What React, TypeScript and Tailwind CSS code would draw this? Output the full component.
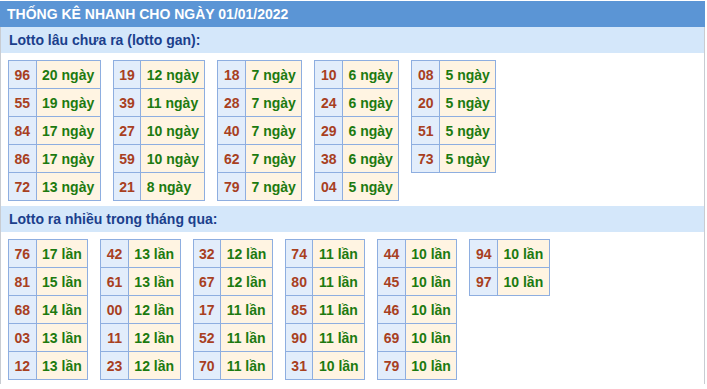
const ganTables: [string, number][][] = [
  [['96', 20], ['55', 19], ['84', 17], ['86', 17], ['72', 13]],
  [['19', 12], ['39', 11], ['27', 10], ['59', 10], ['21', 8]],
  [['18', 7], ['28', 7], ['40', 7], ['62', 7], ['79', 7]],
  [['10', 6], ['24', 6], ['29', 6], ['38', 6], ['04', 5]],
  [['08', 5], ['20', 5], ['51', 5], ['73', 5]],
];

const nhieuTables: [string, number][][] = [
  [['76', 17], ['81', 15], ['68', 14], ['03', 13], ['12', 13]],
  [['42', 13], ['61', 13], ['00', 12], ['11', 12], ['23', 12]],
  [['32', 12], ['67', 12], ['17', 11], ['52', 11], ['70', 11]],
  [['74', 11], ['80', 11], ['85', 11], ['90', 11], ['31', 10]],
  [['44', 10], ['45', 10], ['46', 10], ['69', 10], ['79', 10]],
  [['94', 10], ['97', 10]],
];

const StatTable = ({ rows, unit }: { rows: [string, number][]; unit: string }) => (
  <table className="border-collapse border border-[#8eaee0]">
    <tbody>
      {rows.map(([num, count]) => (
        <tr key={num} className="h-[28px]">
          <td className="border border-[#8eaee0] bg-[#e2edfb] px-[5.5px] py-0 text-center text-[#a8401f]">{num}</td>
          <td className="border border-[#8eaee0] bg-[#fff4e2] px-[5.5px] py-0 text-left text-[#1c7a10]">
            {count} {unit}
          </td>
        </tr>
      ))}
    </tbody>
  </table>
);

const Section = ({ title, tables, unit }: { title: string; tables: [string, number][][]; unit: string }) => (
  <>
    <div className="flex h-[26px] items-center bg-[#d4e7fa] px-[8px] text-[14px] font-bold text-[#1b3f8c]">{title}</div>
    <div className="flex flex-wrap items-start gap-x-[12px] px-[7px] pb-[5px] pt-[7px] text-[14px] font-bold leading-[16px]">
      {tables.map((rows, i) => (
        <StatTable key={i} rows={rows} unit={unit} />
      ))}
    </div>
  </>
);

export default function App() {
  return (
    <div className="w-[705px] bg-white pt-[1px] font-['Liberation_Sans',Arial,sans-serif]">
      <div className="flex h-[26px] items-center bg-[#5b95d5] px-[7px] text-[14px] font-bold text-white">
        THỐNG KÊ NHANH CHO NGÀY 01/01/2022
      </div>
      <div className="h-[357px] border-x border-[#c8ccd2]">
        <Section title="Lotto lâu chưa ra (lotto gan):" tables={ganTables} unit="ngày" />
        <Section title="Lotto ra nhiều trong tháng qua:" tables={nhieuTables} unit="lần" />
      </div>
    </div>
  );
}
